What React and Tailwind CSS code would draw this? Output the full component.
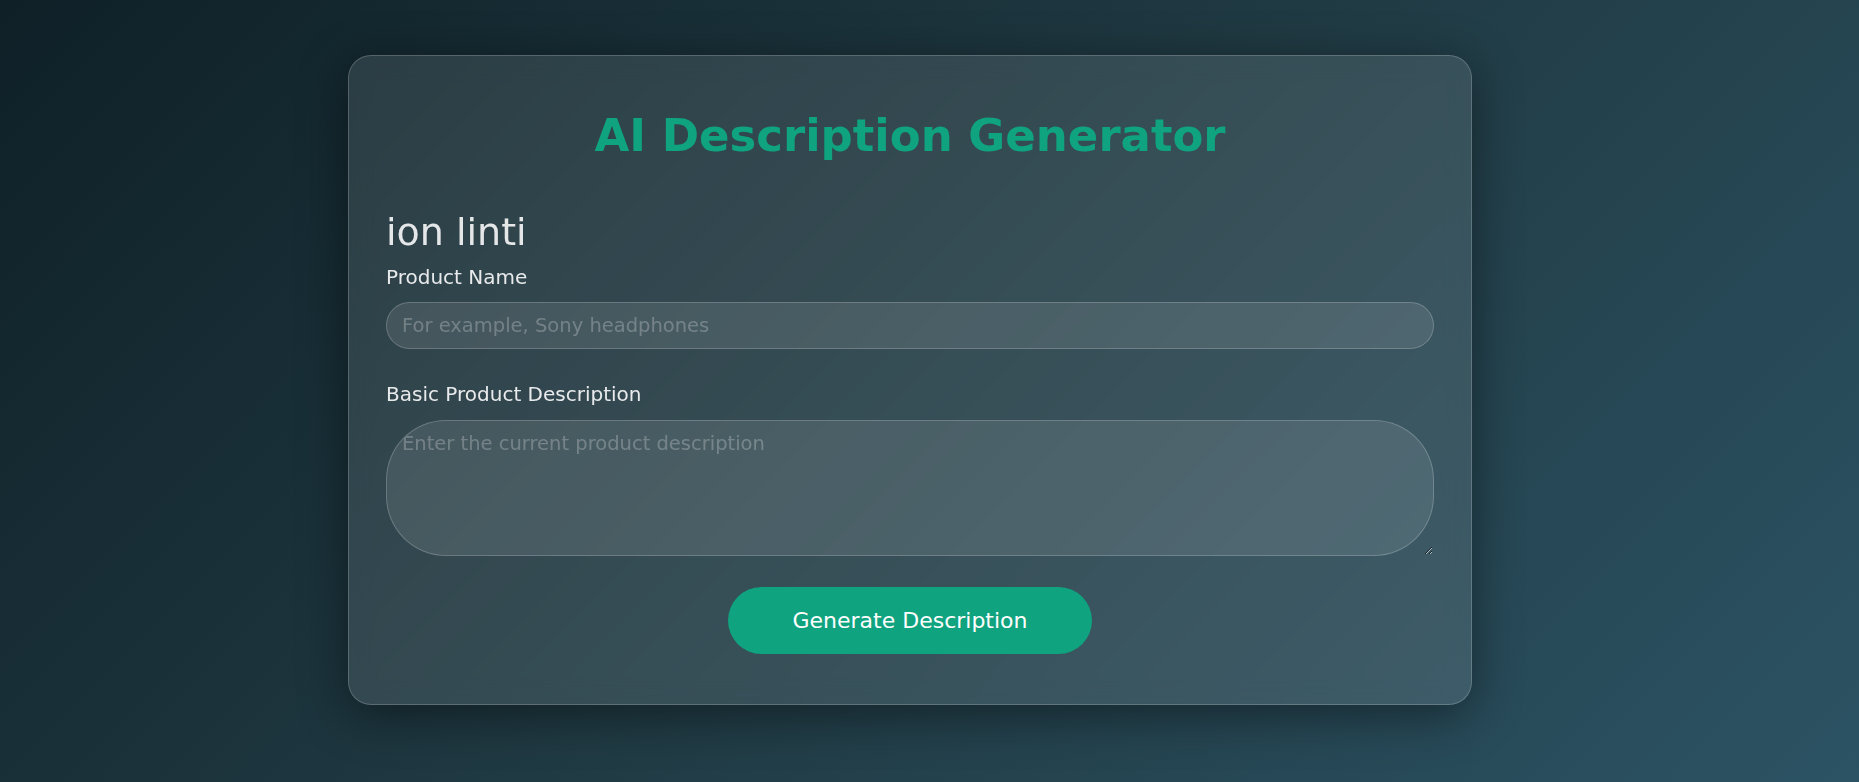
import React, { useState } from 'react';

function App() {
  const [name, setName] = useState('');
  const [desc, setDesc] = useState('');

  return (
    <div className="min-h-screen w-full bg-[linear-gradient(135deg,#0f2027,#203a43,#2c5364)] font-['DejaVu_Sans',sans-serif] pt-[55px] pl-[348px]">
      <div className="w-[1124px] rounded-[23px] border border-white/20 bg-white/10 shadow-[0_10px_50px_rgba(0,0,0,0.45)] backdrop-blur-md px-[37px] pt-[55px] pb-[50px]">
        <h1 className="text-center text-[45px] leading-[50px] font-bold text-[#10a37f]">
          AI Description Generator
        </h1>

        <h2 className="mt-[47px] text-[38px] leading-[48px] font-normal text-[#e4e6e7]">ion linti</h2>

        <label className="mt-[7px] block text-[20px] leading-[28px] text-[#e8eaeb]">
          Product Name
        </label>
        <input
          type="text"
          value={name}
          onChange={(e) => setName(e.target.value)}
          placeholder="For example, Sony headphones"
          className="mt-[11px] block h-[47px] w-full rounded-full border border-white/20 bg-white/10 px-[15px] text-[19.5px] text-white outline-none placeholder:text-white/25"
        />

        <label className="mt-[31px] block text-[20px] leading-[28px] text-[#e8eaeb]">
          Basic Product Description
        </label>
        <textarea
          value={desc}
          onChange={(e) => setDesc(e.target.value)}
          placeholder="Enter the current product description"
          className="mt-[12px] block h-[136px] w-full rounded-[60px] border border-white/20 bg-white/10 px-[15px] py-[8px] text-[19.5px] text-white outline-none placeholder:text-white/25"
        />

        <div className="mt-[31px] flex justify-center">
          <button className="h-[67px] w-[364px] rounded-full bg-[#10a37f] text-[22px] text-white">
            Generate Description
          </button>
        </div>
      </div>
    </div>
  );
}

export default App;
